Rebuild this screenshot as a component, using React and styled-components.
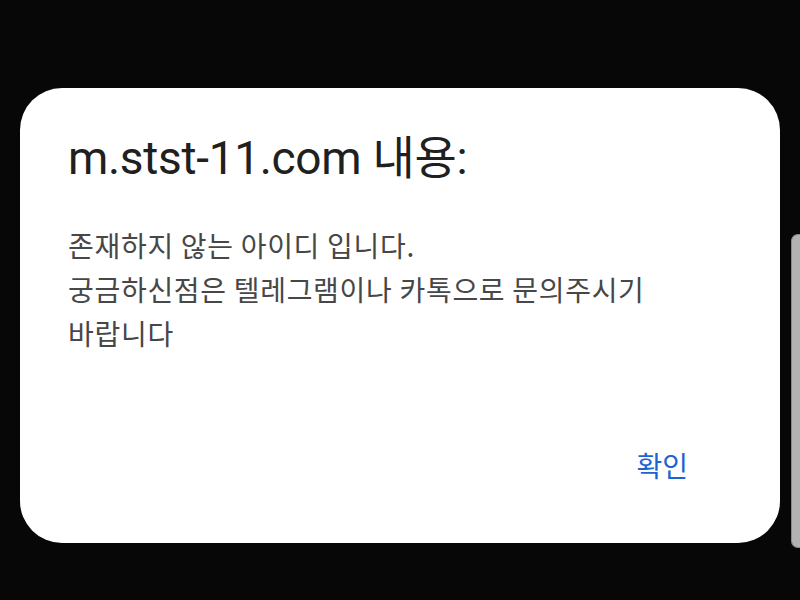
import React from "react";
import styled, { createGlobalStyle } from "styled-components";

const Global = createGlobalStyle`
  html, body { margin: 0; padding: 0; background: #070707; }
  body { width: 800px; height: 600px; overflow: hidden; }
`;

const Screen = styled.div`
  position: relative;
  width: 800px;
  height: 600px;
  background: #070707;
  padding: 88px 20px 0 20px;
  box-sizing: border-box;
`;

const Dialog = styled.div`
  width: 760px;
  height: 455px;
  box-sizing: border-box;
  background: #ffffff;
  border-radius: 42px;
  display: flex;
  flex-direction: column;
  padding: 43px 0 0 48px;
`;

const Title = styled.h1`
  margin: 0;
  font-family: Roboto, "Noto Sans CJK KR", sans-serif;
  font-weight: 400;
  font-size: 46px;
  line-height: 54px;
  color: #202020;
  letter-spacing: -0.3px;
`;

const Message = styled.p`
  margin: 38px 0 0 0;
  font-family: "Noto Sans CJK KR", sans-serif;
  font-weight: 400;
  font-size: 28px;
  line-height: 44px;
  letter-spacing: 0.7px;
  color: #474747;
  white-space: pre-line;
`;

const Actions = styled.div`
  margin-top: auto;
  display: flex;
  justify-content: flex-end;
  padding: 0 92px 58px 0;
`;

const Button = styled.button`
  border: none;
  background: transparent;
  padding: 0;
  font-family: "Noto Sans CJK KR", sans-serif;
  font-size: 28px;
  line-height: 40px;
  color: #1d63d4;
  cursor: pointer;
`;

const EdgeHandle = styled.div`
  position: absolute;
  right: 0;
  top: 234px;
  width: 9px;
  height: 314px;
  background: #b2b2b2;
  border: 1px solid #8a8a8a;
  border-right: none;
  border-radius: 7px 0 0 7px;
  box-sizing: border-box;
`;

export default function App() {
  return (
    <>
      <Global />
      <Screen>
        <Dialog>
          <Title>m.stst-11.com 내용:</Title>
          <Message>
            {"존재하지 않는 아이디 입니다.\n궁금하신점은 텔레그램이나 카톡으로 문의주시기\n바랍니다"}
          </Message>
          <Actions>
            <Button>확인</Button>
          </Actions>
        </Dialog>
        <EdgeHandle />
      </Screen>
    </>
  );
}
